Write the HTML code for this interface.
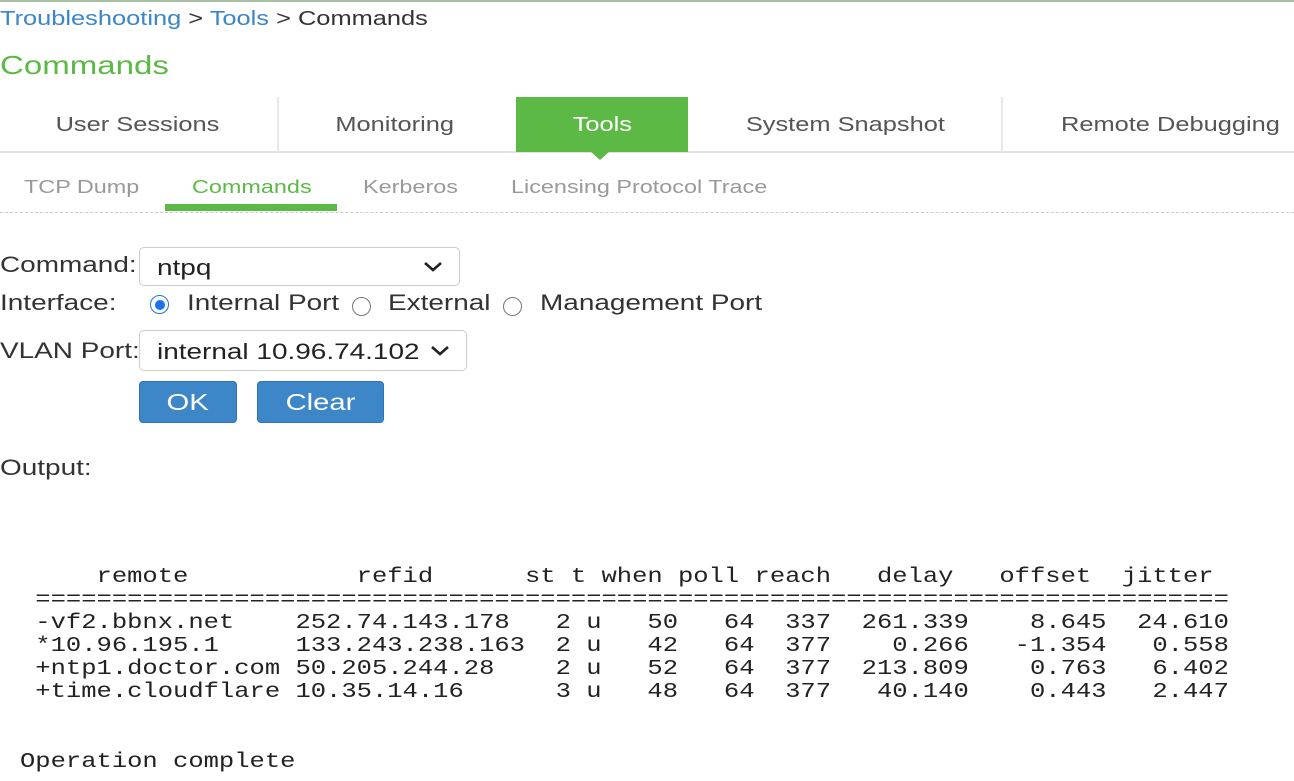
<!DOCTYPE html>
<html><head><style>
body{margin:0;width:1294px;height:781px;position:relative;background:#fff;font-family:"Liberation Sans",sans-serif;overflow:hidden}
.a{position:absolute;white-space:nowrap}
.s{display:inline-block;transform:scaleX(1.27);transform-origin:0 0}
.c{display:inline-block;transform:scaleX(1.27);transform-origin:50% 0}
pre{margin:0;font-family:"Liberation Mono",monospace;font-size:25.5px;line-height:28px;color:#222;transform:scaleY(0.85);transform-origin:0 0}
.rad{position:absolute;width:19px;height:19px;border:1.5px solid #777;border-radius:50%;box-sizing:border-box}
.sel{position:absolute;border:1px solid #ccc;border-radius:5px;box-sizing:border-box;background:#fff}
.btn{position:absolute;background:#3d87c8;border-radius:4px;color:#fff;font-size:23px;text-align:center;border:1px solid #2f73b0;box-sizing:border-box}
</style></head><body>
<div class="a" style="left:0;top:0;width:1294px;height:2px;background:#a9bfa4"></div>
<div class="a" style="left:0;top:8px;font-size:20px;color:#333"><span class="s"><span style="color:#3a86c8">Troubleshooting</span> &gt; <span style="color:#3a86c8">Tools</span> &gt; Commands</span></div>
<div class="a" style="left:0;top:50px;font-size:26px;color:#5cb946"><span class="s">Commands</span></div>

<div class="a" style="left:0;top:151px;width:1294px;height:2px;background:#e2e2e2"></div>
<div class="a" style="left:277px;top:97px;width:2px;height:54px;background:#e8e8e8"></div>
<div class="a" style="left:1001px;top:97px;width:2px;height:54px;background:#e8e8e8"></div>
<div class="a" style="left:516px;top:97px;width:172px;height:55px;background:#5cb946"></div>
<div class="a" style="left:590px;top:151px;width:0;height:0;border-left:10px solid transparent;border-right:10px solid transparent;border-top:9px solid #5cb946"></div>
<div class="a" style="left:0;top:114px;width:274px;text-align:center;font-size:20px;color:#555"><span class="c">User Sessions</span></div>
<div class="a" style="left:279px;top:114px;width:232px;text-align:center;font-size:20px;color:#555"><span class="c">Monitoring</span></div>
<div class="a" style="left:516px;top:114px;width:172px;text-align:center;font-size:20px;color:#fff"><span class="c">Tools</span></div>
<div class="a" style="left:690px;top:114px;width:310px;text-align:center;font-size:20px;color:#555"><span class="c">System Snapshot</span></div>
<div class="a" style="left:1061px;top:114px;font-size:20px;color:#555"><span class="s">Remote Debugging</span></div>

<div class="a" style="left:24px;top:177px;font-size:18px;color:#999"><span class="s" style="transform:scaleX(1.3)">TCP Dump</span></div>
<div class="a" style="left:192px;top:177px;font-size:18px;color:#5cb946"><span class="s" style="transform:scaleX(1.3)">Commands</span></div>
<div class="a" style="left:363px;top:177px;font-size:18px;color:#999"><span class="s" style="transform:scaleX(1.3)">Kerberos</span></div>
<div class="a" style="left:511px;top:177px;font-size:18px;color:#999"><span class="s" style="transform:scaleX(1.3)">Licensing Protocol Trace</span></div>
<div class="a" style="left:165px;top:204px;width:172px;height:7px;background:#5cb946"></div>
<div class="a" style="left:0;top:212px;width:1294px;border-top:1.5px dashed #ccc"></div>

<div class="a" style="left:0;top:252px;font-size:22px;color:#333"><span class="s">Command:</span></div>
<div class="sel" style="left:139px;top:247px;width:321px;height:39px"></div>
<div class="a" style="left:157px;top:255px;font-size:22px;color:#222"><span class="s">ntpq</span></div>
<svg class="a" style="left:423px;top:260px" width="20" height="14"><path d="M2 3 L10 10 L18 3" stroke="#222" stroke-width="2.6" fill="none"/></svg>

<div class="a" style="left:0;top:290px;font-size:22px;color:#333"><span class="s">Interface:</span></div>
<div class="rad" style="left:150px;top:295px;border-color:#1a73e8"></div>
<div class="a" style="left:155px;top:300px;width:10px;height:10px;border-radius:50%;background:#1a73e8"></div>
<div class="a" style="left:187px;top:290px;font-size:22px;color:#333"><span class="s">Internal Port</span></div>
<div class="rad" style="left:352px;top:297px"></div>
<div class="a" style="left:388px;top:290px;font-size:22px;color:#333"><span class="s">External</span></div>
<div class="rad" style="left:503px;top:297px"></div>
<div class="a" style="left:540px;top:290px;font-size:22px;color:#333"><span class="s">Management Port</span></div>

<div class="a" style="left:0;top:338px;font-size:22px;color:#333"><span class="s">VLAN Port:</span></div>
<div class="sel" style="left:139px;top:330px;width:328px;height:41px"></div>
<div class="a" style="left:157px;top:339px;font-size:22px;color:#222"><span class="s">internal 10.96.74.102</span></div>
<svg class="a" style="left:430px;top:344px" width="20" height="14"><path d="M2 3 L10 10 L18 3" stroke="#222" stroke-width="2.6" fill="none"/></svg>

<div class="btn" style="left:139px;top:381px;width:98px;height:42px;line-height:40px"><span class="c">OK</span></div>
<div class="btn" style="left:257px;top:381px;width:127px;height:42px;line-height:40px"><span class="c">Clear</span></div>

<div class="a" style="left:0;top:455px;font-size:22px;color:#333"><span class="s">Output:</span></div>

<div class="a" style="left:20px;top:565px"><pre style="line-height:27px">     remote           refid      st t when poll reach   delay   offset  jitter
 ==============================================================================
 -vf2.bbnx.net    252.74.143.178   2 u   50   64  337  261.339    8.645  24.610
 *10.96.195.1     133.243.238.163  2 u   42   64  377    0.266   -1.354   0.558
 +ntp1.doctor.com 50.205.244.28    2 u   52   64  377  213.809    0.763   6.402
 +time.cloudflare 10.35.14.16      3 u   48   64  377   40.140    0.443   2.447</pre></div>
<div class="a" style="left:20px;top:750px"><pre>Operation complete</pre></div>
</body></html>
